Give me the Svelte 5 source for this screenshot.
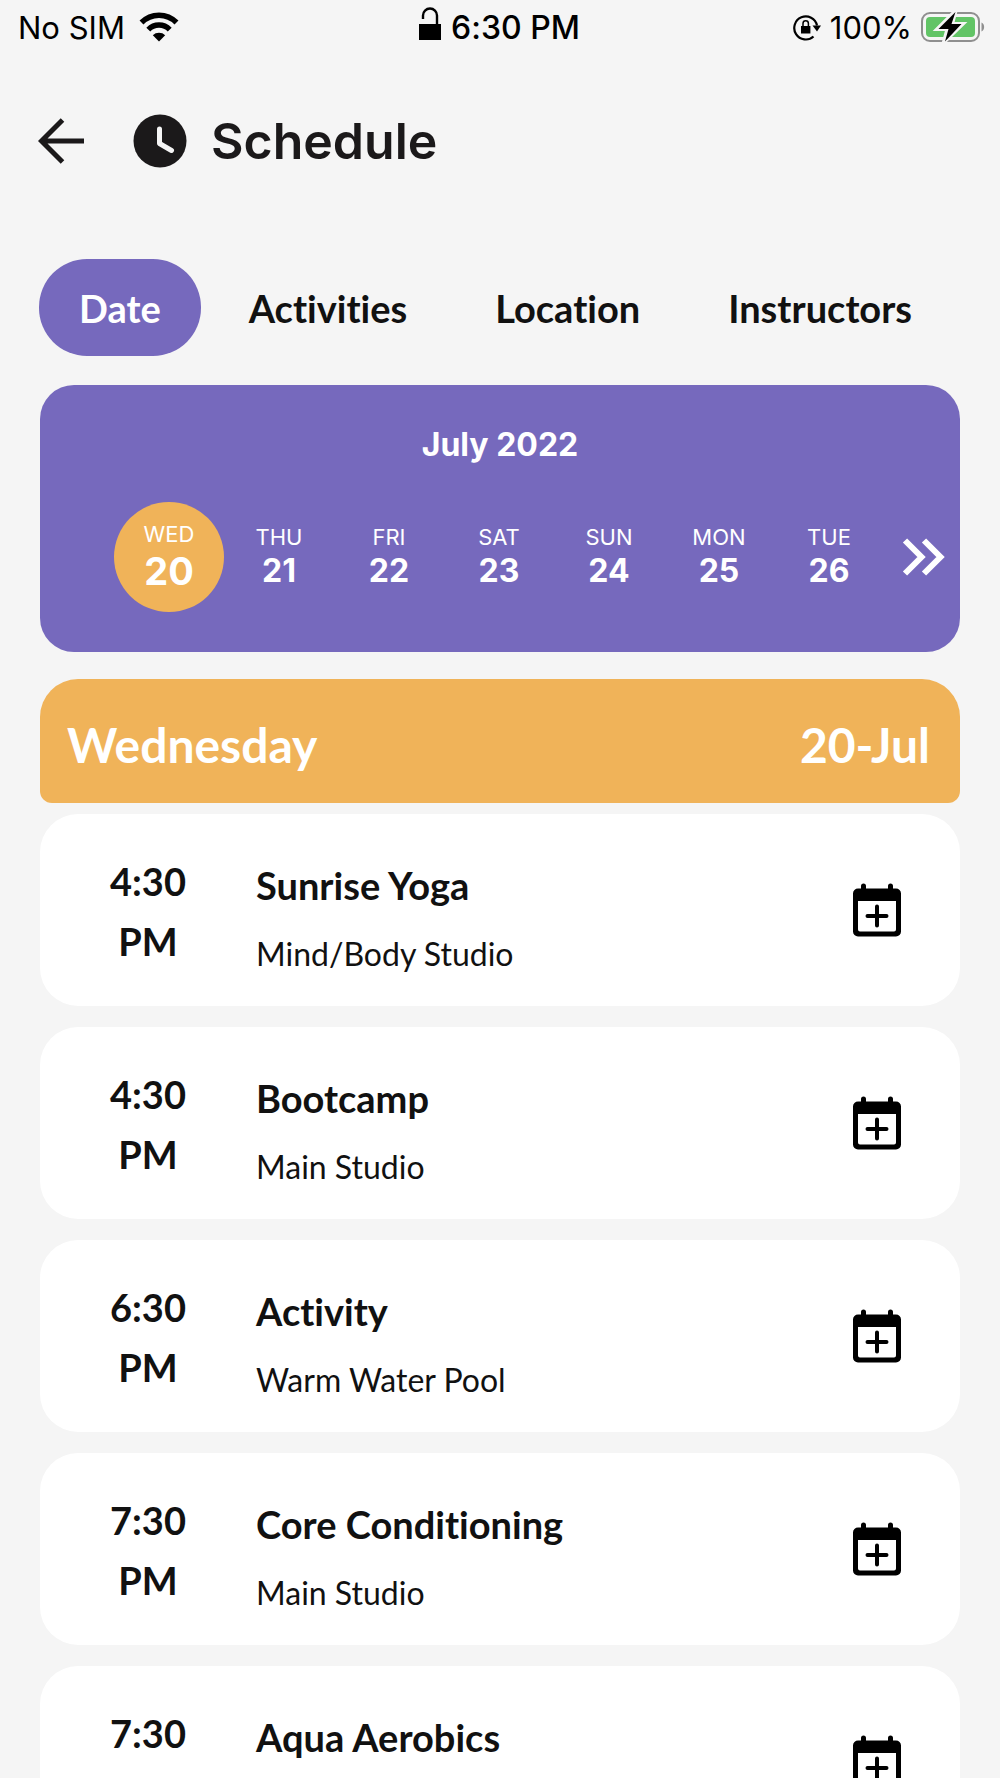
<script>
  let tabs = ["Date", "Activities", "Location", "Instructors"];
  let activeTab = "Date";

  let days = [
    { name: "WED", number: 20 },
    { name: "THU", number: 21 },
    { name: "FRI", number: 22 },
    { name: "SAT", number: 23 },
    { name: "SUN", number: 24 },
    { name: "MON", number: 25 },
    { name: "TUE", number: 26 },
  ];
  let selectedDay = 20;

  let classes = [
    { time: "4:30", half: "PM", title: "Sunrise Yoga", place: "Mind/Body Studio" },
    { time: "4:30", half: "PM", title: "Bootcamp", place: "Main Studio" },
    { time: "6:30", half: "PM", title: "Activity", place: "Warm Water Pool" },
    { time: "7:30", half: "PM", title: "Core Conditioning", place: "Main Studio" },
    { time: "7:30", half: "PM", title: "Aqua Aerobics", place: "Main Studio" },
  ];
</script>

<div class="screen">
  <div class="status-bar">
    <div class="status-left">
      <span>No SIM</span>
      <svg width="40" height="30" viewBox="0 0 40 30" aria-hidden="true">
        <path d="M2.500 10.500a24.500 24.500 0 0 1 35 0" fill="none" stroke="#000" stroke-width="5.500" />
        <path d="M9.300 17.600a15 15 0 0 1 21.400 0" fill="none" stroke="#000" stroke-width="5.500" />
        <path d="M20 29.500l-6.200-6.200a9 9 0 0 1 12.400 0z" />
      </svg>
    </div>
    <div class="status-center">
      <svg width="22" height="34" viewBox="0 0 22 34" aria-hidden="true">
        <path d="M0 17h22v16H0z" />
        <path d="M4 12V8.500a7 7 0 0 1 14 0V18" fill="none" stroke="#000" stroke-width="2.400" />
      </svg>
      <span>6:30 PM</span>
    </div>
    <div class="status-right">
      <svg width="28" height="28" viewBox="0 0 28 28" aria-hidden="true">
        <path d="M20.500 23.500A11.500 11.500 0 1 1 24 12.500" fill="none" stroke="#000" stroke-width="2.200" />
        <path d="M19.500 12.500H28L24 18.500z" />
        <path d="M8 13h9.400v7.500H8z" />
        <path d="M10 13v-2.500a2.700 2.700 0 0 1 5.400 0V13" fill="none" stroke="#000" stroke-width="1.500" />
      </svg>
      <span>100%</span>
      <svg width="64" height="32" viewBox="0 0 64 32" aria-hidden="true">
        <rect x="1" y="2" width="57" height="28" rx="8" fill="none" stroke="#8f8f8f" stroke-width="2" />
        <path d="M60.500 11.500c3.500 1.500 3.500 7.500 0 9z" fill="#8f8f8f" />
        <rect x="5" y="6" width="49" height="20" rx="4" fill="#62c466" />
        <path d="M34.500 0L16.500 18h10l-3.500 13L41.500 13h-10.500z" stroke="#f5f5f5" stroke-width="4" />
        <path d="M34.500 1L17.500 18h10l-3.500 12.500L40.500 13h-10z" />
      </svg>
    </div>
  </div>

  <header class="header">
    <button class="icon-button" aria-label="Back">
      <svg width="48" height="48" viewBox="0 0 48 48">
        <path d="M24.500 3L3.500 24l21 21M4 24h42" fill="none" stroke="#1b191a" stroke-width="5" />
      </svg>
    </button>
    <svg class="clock" width="54" height="54" viewBox="0 0 54 54" aria-hidden="true">
      <circle cx="27" cy="27" r="26.500" fill="#1b191a" />
      <path d="M26.500 15v14.500l12 7" fill="none" stroke="#f5f5f5" stroke-width="5" stroke-linecap="round" stroke-linejoin="round" />
    </svg>
    <h1>Schedule</h1>
  </header>

  <nav class="tabs">
    {#each tabs as tab}
      <button class="tab" class:active={tab === activeTab} on:click={() => (activeTab = tab)}>{tab}</button>
    {/each}
  </nav>

  <section class="calendar">
    <h2>July 2022</h2>
    <div class="week">
      {#each days as day}
        <button class="day" class:selected={day.number === selectedDay} on:click={() => (selectedDay = day.number)}>
          <span class="day-name">{day.name}</span>
          <span class="day-number">{day.number}</span>
        </button>
      {/each}
      <button class="next" aria-label="Next week">
        <svg width="44" height="38" viewBox="0 0 44 38">
          <path d="M3 2.500L19.500 19 3 35.500M22 2.500L38.500 19 22 35.500" fill="none" stroke="#fff" stroke-width="6" />
        </svg>
      </button>
    </div>
  </section>

  <div class="day-header">
    <span>Wednesday</span>
    <span>20-Jul</span>
  </div>

  <ul class="class-list">
    {#each classes as item}
      <li class="card">
        <div class="time">{item.time}<br />{item.half}</div>
        <div class="details">
          <h3>{item.title}</h3>
          <p>{item.place}</p>
        </div>
        <button class="icon-button add" aria-label="Add {item.title} to calendar">
          <svg width="48" height="54" viewBox="0 0 48 54">
            <path d="M10.500 3v5M37.500 3v5" stroke="#000" stroke-width="5" stroke-linecap="round" />
            <path fill-rule="evenodd" d="M5 5.500h38a5 5 0 0 1 5 5v38a5 5 0 0 1-5 5H5a5 5 0 0 1-5-5v-38a5 5 0 0 1 5-5zM5 18v28.500a2 2 0 0 0 2 2h34a2 2 0 0 0 2-2V18z" />
            <path d="M24 23.500v19M14.500 33h19" stroke="#000" stroke-width="4" stroke-linecap="round" />
          </svg>
        </button>
      </li>
    {/each}
  </ul>
</div>

<style>
  :global(body) {
    margin: 0;
    background-color: #f5f5f5;
  }
  .screen {
    display: flex;
    flex-direction: column;
    height: 100vh;
    overflow: hidden;
    color: #111111;
    font-family: Lato, sans-serif;
    font-variant-ligatures: none;
  }
  button {
    border: none;
    padding: 0;
    background: none;
    color: inherit;
    font-family: inherit;
    font-variant-ligatures: inherit;
    cursor: pointer;
  }
  h1, h2, h3, p, ul {
    margin: 0;
    padding: 0;
  }
  svg {
    display: block;
    flex-shrink: 0;
  }

  .status-bar {
    display: grid;
    grid-template-columns: 1fr auto 1fr;
    align-items: center;
    height: 54px;
    flex-shrink: 0;
    padding: 0 15px 0 18px;
    color: #000000;
    font-family: Inter, sans-serif;
    font-size: 31px;
  }
  .status-left,
  .status-center,
  .status-right {
    display: flex;
    align-items: center;
  }
  .status-left {
    gap: 14px;
  }
  .status-center {
    gap: 10px;
    padding-right: 4px;
    font-size: 32px;
    font-weight: 500;
  }
  .status-center svg {
    margin-bottom: 6px;
  }
  .status-right {
    gap: 9px;
    justify-content: flex-end;
  }

  .header {
    display: flex;
    align-items: center;
    padding: 47px 38px 78px;
    height: 80px;
    flex-shrink: 0;
  }
  .clock {
    margin: 0 24px 0 47px;
  }
  h1 {
    color: #1b191a;
    font-family: Inter, sans-serif;
    font-size: 50px;
    font-weight: 600;
  }

  .tabs {
    display: flex;
    gap: 8px;
    flex-shrink: 0;
    padding: 0 39px;
  }
  .tab {
    height: 97px;
    padding: 0 40px;
    border-radius: 48px;
    font-size: 38px;
    font-weight: 700;
  }
  .tab.active {
    background-color: #7669bd;
    color: #ffffff;
  }

  .calendar {
    flex-shrink: 0;
    margin: 29px 40px 0;
    padding: 36px 0 40px;
    border-radius: 34px;
    background-color: #7669bd;
    color: #ffffff;
    font-family: Inter, sans-serif;
    text-align: center;
  }
  h2 {
    font-size: 32px;
    line-height: 48px;
    font-weight: 700;
  }
  .week {
    display: grid;
    grid-template-columns: repeat(7, 1fr) 76px;
    align-items: center;
    margin-top: 33px;
    padding-left: 74px;
  }
  .day {
    display: flex;
    flex-direction: column;
    align-items: center;
    justify-content: center;
    height: 110px;
  }
  .day-name {
    font-size: 22px;
    line-height: 28px;
  }
  .day-number {
    font-size: 32px;
    line-height: 40px;
    font-weight: 700;
  }
  .selected {
    border-radius: 50%;
    background-color: #f0b359;
  }
  .selected .day-number {
    font-size: 38px;
    line-height: 46px;
  }
  .next {
    display: flex;
    justify-content: flex-end;
    padding-right: 14px;
  }

  .day-header {
    display: flex;
    align-items: center;
    justify-content: space-between;
    flex-shrink: 0;
    margin: 27px 40px 11px;
    padding: 36px 30px 28px 27px;
    border-radius: 38px 38px 12px 12px;
    background-color: #f0b359;
    color: #ffffff;
    font-size: 48px;
    line-height: 60px;
    font-weight: 700;
  }

  .class-list {
    display: flex;
    flex: 1;
    flex-direction: column;
    gap: 21px;
    min-height: 0;
    padding: 0 40px;
    overflow-y: auto;
    scrollbar-width: none;
    list-style: none;
  }
  .card {
    display: flex;
    flex-shrink: 0;
    align-items: center;
    height: 192px;
    border-radius: 38px;
    background-color: #ffffff;
  }
  .time {
    width: 216px;
    padding-top: 2px;
    font-size: 38px;
    line-height: 60px;
    font-weight: 700;
    text-align: center;
  }
  .details {
    flex: 1;
    padding-top: 22px;
  }
  h3 {
    font-size: 38px;
    line-height: 66px;
    font-weight: 700;
  }
  p {
    font-size: 32px;
    line-height: 72px;
  }
  .add {
    margin-right: 59px;
  }
</style>
